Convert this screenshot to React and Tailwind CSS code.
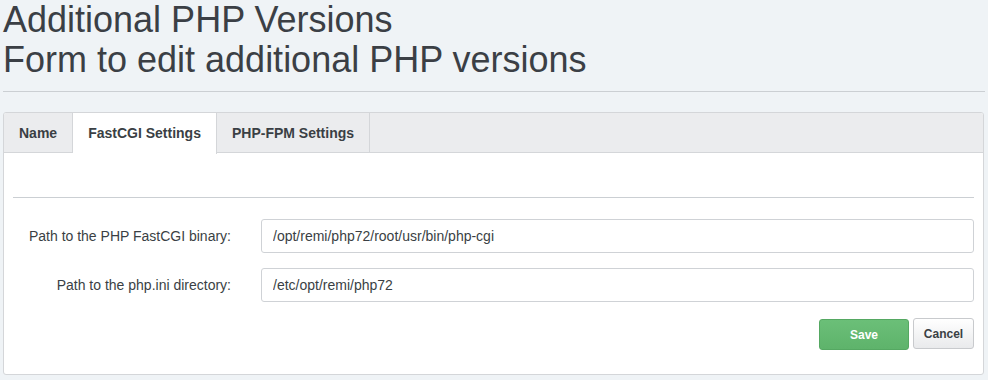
import React from "react";

const font = { fontFamily: '"Liberation Sans", Arial, sans-serif' };

const Tab = ({ label, active }) => (
  <div
    className={
      "h-[40px] flex items-center px-[15px] text-[14px] font-bold text-[#3a3f44] border-r border-[#d4d6d9] " +
      (active ? "bg-white -mb-px h-[41px]" : "")
    }
  >
    {label}
  </div>
);

const Row = ({ label, value }) => (
  <div className="flex items-center h-[34px]">
    <label className="w-[218px] text-right text-[14px] text-[#3a3f44]">{label}</label>
    <div className="ml-[30px] flex-1">
      <input
        readOnly
        value={value}
        className="w-full h-[34px] border border-[#cfd2d6] rounded-[3px] bg-white px-[11px] text-[14px] text-[#3a3f44] outline-none"
        style={font}
      />
    </div>
  </div>
);

export default function App() {
  return (
    <div className="w-[988px] h-[380px] bg-[#eff3f6] overflow-hidden" style={font}>
      <div className="px-[3px]">
        <h1 className="text-[36px] leading-[39.6px] text-[#3b3f45]">
          Additional PHP Versions
          <br />
          Form to edit additional PHP versions
        </h1>
        <hr className="mt-[12px] border-t border-[#cbcfd3]" />

        <div className="mt-[20px] w-[981px] h-[263px] bg-white border border-[#d4d6d9] rounded-[3px] overflow-hidden">
          <div className="flex h-[40px] bg-[#ebecee] border-b border-[#d4d6d9]">
            <Tab label="Name" />
            <Tab label="FastCGI Settings" active />
            <Tab label="PHP-FPM Settings" />
          </div>

          <div className="px-[9px]">
            <hr className="mt-[44px] border-t border-[#cbcfd3]" />
            <div className="mt-[21px] flex flex-col gap-[15px]">
              <Row label="Path to the PHP FastCGI binary:" value="/opt/remi/php72/root/usr/bin/php-cgi" />
              <Row label="Path to the php.ini directory:" value="/etc/opt/remi/php72" />
            </div>
            <div className="mt-[16px] flex justify-end gap-[4px]">
              <button className="w-[90px] h-[31px] mt-[1px] rounded-[3px] border border-[#55a862] bg-gradient-to-b from-[#6bbf78] to-[#5eb36b] text-white text-[12px] font-bold" style={font}>
                Save
              </button>
              <button className="w-[61px] h-[31px] rounded-[3px] border border-[#c8cacd] bg-gradient-to-b from-white to-[#e9eaec] text-[#3a3f44] text-[12px] font-bold" style={font}>
                Cancel
              </button>
            </div>
          </div>
        </div>
      </div>
    </div>
  );
}
